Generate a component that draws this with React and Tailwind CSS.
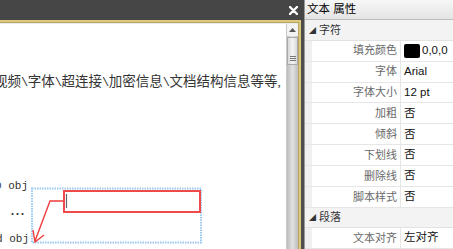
import React from 'react';

const rows = [
  { label: '填充颜色', value: '0,0,0', swatch: true },
  { label: '字体', value: 'Arial' },
  { label: '字体大小', value: '12 pt' },
  { label: '加粗', value: '否' },
  { label: '倾斜', value: '否' },
  { label: '下划线', value: '否' },
  { label: '删除线', value: '否' },
  { label: '脚本样式', value: '否' },
];

const ui = { fontFamily: '"Liberation Sans", "Noto Sans CJK SC", sans-serif' };
const doc = { fontFamily: '"Liberation Serif", "Noto Sans CJK SC", serif' };
const mono = { fontFamily: '"Liberation Mono", "Noto Sans CJK SC", monospace' };
const cjk = { fontFamily: '"Noto Sans CJK SC", sans-serif' };

const parts = ['视频', '字体', '超连接', '加密信息', '文档结构信息等等'];

const Section = ({ title }) => (
  <div className="flex items-center h-[21px] bg-[#f3f3f3] border-b border-[#e2e2e2] pl-[4px] text-[11px] text-[#333]">
    <span className="text-[7px] mr-[3px] mt-[2px]">◢</span>
    {title}
  </div>
);

const Row = ({ label, value, swatch }) => (
  <div className="flex h-[21.5px] border-b border-[#e6e6e6]">
    <div className="w-[7px] bg-[#f0f0f0]" />
    <div className="w-[89px] flex items-center justify-end pr-[3px] text-[11px] text-[#6a6a6a] border-r border-[#e6e6e6]">{label}</div>
    <div className="flex-1 flex items-center pl-[3px] text-[11.5px] text-[#111] bg-white">
      {swatch && <span className="w-[16px] h-[14px] bg-black rounded-[2px] mr-[2px]" />}
      {value}
    </div>
  </div>
);

export default function App() {
  return (
    <div className="flex w-[453px] h-[249px] overflow-hidden" style={ui}>
      {/* left document pane */}
      <div className="relative w-[304px] h-full flex flex-col bg-[#4d4d4d]">
        <div className="h-[20px] flex items-center justify-end pr-[6px] bg-[#464646]">
          <svg width="9" height="9" viewBox="0 0 9 9">
            <path d="M1 1 L8 8 M8 1 L1 8" stroke="#fff" strokeWidth="2.4" strokeLinecap="round" />
          </svg>
        </div>
        <div className="flex-1 flex pr-[3px] min-h-0">
          <div className="flex-1 flex border-t-2 border-r-2 border-[#dcc77c] min-h-0">
            <div className="flex-1 flex border-t border-r border-[#b8a664] pt-[1px] bg-[#e9e9e9] min-h-0">
              <div className="flex-1 bg-white overflow-hidden text-[#333] text-[13.5px] leading-none" style={doc}>
                <div className="mt-[51px] -ml-[6px] whitespace-nowrap">
                  {parts.map((p, i) => (
                    <React.Fragment key={p}>
                      {i > 0 && <span className="inline-block w-[6.75px] text-center text-[12px]" style={mono}>\</span>}
                      {p}
                    </React.Fragment>
                  ))}
                  <span className="inline-block w-[6.75px]">,</span>
                </div>
                <div className="mt-[92px] -ml-[5px] whitespace-nowrap text-[11px]" style={mono}>0 obj</div>
                <div className="mt-[14px] ml-[10px] whitespace-nowrap text-[15px]" style={cjk}>…</div>
                <div className="mt-[13px] -ml-[4px] whitespace-nowrap text-[11px]" style={mono}>d obj</div>
              </div>
              <div className="w-[12px] flex flex-col bg-gradient-to-r from-[#bdbdbd] via-[#e2e2e2] to-[#bdbdbd] border-l border-[#c8c8c8]">
                <div className="h-[12px] flex items-center justify-center bg-[#f2f2f2]">
                  <svg width="7" height="4" viewBox="0 0 7 4"><path d="M0 4 L3.5 0 L7 4 Z" fill="#555" /></svg>
                </div>
                <div className="h-[28px] mt-[1px] bg-gradient-to-r from-[#d8d8d8] via-[#f4f4f4] to-[#d8d8d8] border border-[#aaa] flex items-end justify-center pb-[3px]">
                  <div className="w-[6px] h-[5px] border-t border-b border-[#777] flex items-center"><div className="w-full h-px bg-[#777]" /></div>
                </div>
              </div>
            </div>
          </div>
        </div>
        {/* annotation overlay */}
        <svg className="absolute left-0 top-0" width="304" height="249">
          <rect x="32" y="188.5" width="169" height="54" fill="none" stroke="#9ccaf2" strokeWidth="2" strokeDasharray="1.5 1" />
          <rect x="64" y="191" width="136" height="21" fill="none" stroke="#ef4a4a" strokeWidth="2" />
          <path d="M66.5 194 V208" stroke="#666" strokeWidth="1.2" />
          <path d="M63 201 H50 L35 241" fill="none" stroke="#f03c3c" strokeWidth="1.4" />
          <path d="M33 230 L35 242 L44 235" fill="none" stroke="#f03c3c" strokeWidth="1.4" />
        </svg>
      </div>

      {/* right properties pane */}
      <div className="flex-1 flex flex-col border-l border-[#9a9a9a] bg-white">
        <div className="h-[21px] flex items-center pl-[2px] text-[11.5px] text-black bg-gradient-to-b from-[#f7f7f7] to-[#e4e4e4] border-b border-[#bcbcbc]">
          文本 属性
        </div>
        <Section title="字符" />
        {rows.map((r) => (
          <Row key={r.label} {...r} />
        ))}
        <Section title="段落" />
        <Row label="文本对齐" value="左对齐" />
      </div>
    </div>
  );
}
